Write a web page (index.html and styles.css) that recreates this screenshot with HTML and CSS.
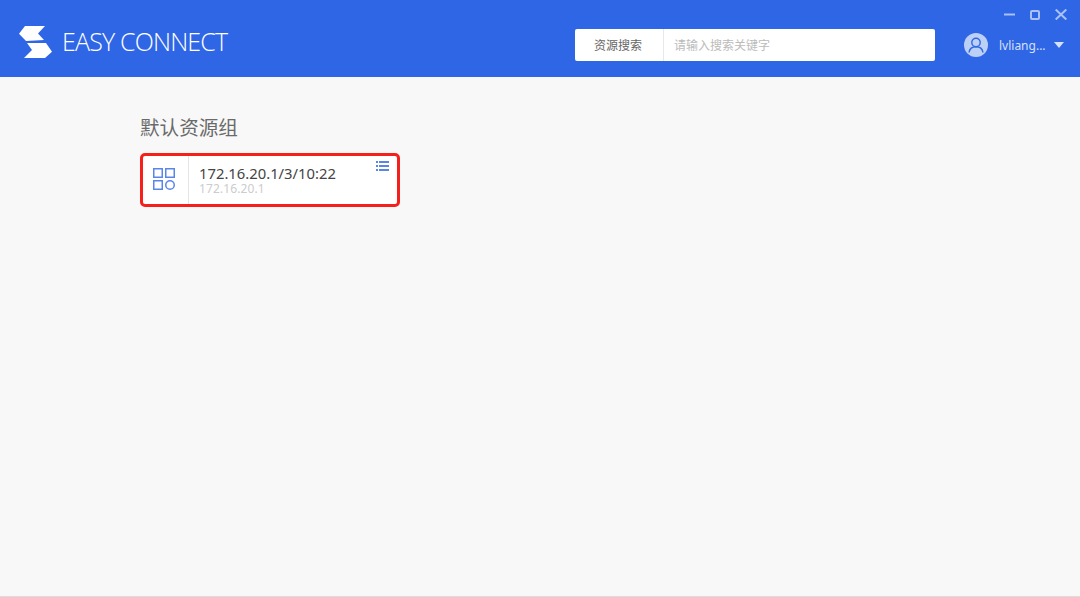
FILE: index.html
```html
<!DOCTYPE html>
<html lang="zh">
<head>
<meta charset="utf-8">
<title>EasyConnect</title>
<link rel="stylesheet" href="styles.css">
</head>
<body>
<header class="topbar">
  <div class="brand">
    <svg class="logo" width="33" height="32" viewBox="0 0 33 32"><path fill="#fff" d="M6 0H26L19 7.500L25 14L7 15L0 7.700Z"/><path fill="#fff" d="M8 17H27L33 25.700L26 32H5L13 24Z"/></svg>
    <span class="brand-name">EASY CONNECT</span>
  </div>
  <div class="search">
    <div class="search-label">资源搜索</div>
    <div class="search-input">请输入搜索关键字</div>
  </div>
  <div class="user">
    <svg class="avatar" width="24" height="24" viewBox="0 0 24 24"><circle cx="12" cy="12" r="12" fill="#bccff5"/><circle cx="12" cy="9.500" r="4.200" fill="none" stroke="#2f66e6" stroke-width="1.400"/><path d="M5 19.500c.6-4 3.400-5.800 7-5.800s6.400 1.800 7 5.800" fill="none" stroke="#2f66e6" stroke-width="1.400"/></svg>
    <span class="user-name">lvliang...</span>
    <span class="caret"></span>
  </div>
  <div class="winctl">
    <svg width="11" height="11" viewBox="0 0 11 11"><path d="M0 5.500H11" stroke="#a9c1f3" stroke-width="2"/></svg>
    <svg width="10" height="10" viewBox="0 0 10 10"><rect x="1" y="1" width="8" height="8" rx="1" fill="none" stroke="#a9c1f3" stroke-width="2"/></svg>
    <svg width="12" height="11" viewBox="0 0 12 11"><path d="M.7 .5L11.300 10.500M11.300 .5L.7 10.500" stroke="#a9c1f3" stroke-width="2"/></svg>
  </div>
</header>
<main class="content">
  <h2 class="group-title">默认资源组</h2>
  <div class="card">
    <div class="card-icon">
      <svg class="card-glyph" width="22" height="22" viewBox="0 0 22 22" fill="none" stroke="#5a86ea" stroke-width="1.500"><rect x=".75" y=".75" width="8.500" height="8.500"/><rect x="12.750" y=".75" width="8.500" height="8.500"/><rect x=".75" y="12.750" width="8.500" height="8.500"/><circle cx="17" cy="17" r="4.250"/></svg>
    </div>
    <div class="card-text">
      <div class="card-name">172.16.20.1/3/10:22</div>
      <div class="card-addr">172.16.20.1</div>
    </div>
    <svg class="card-menu" width="13" height="10" viewBox="0 0 13 10" fill="#5a86ea"><rect x="0" y="0" width="2" height="2"/><rect x="3" y="0" width="10" height="2"/><rect x="0" y="4" width="2" height="2"/><rect x="3" y="4" width="10" height="2"/><rect x="0" y="8" width="2" height="2"/><rect x="3" y="8" width="10" height="2"/></svg>
  </div>
</main>
</body>
</html>
```
FILE: styles.css
```css
* { box-sizing: border-box; }
html, body { height: 100%; }
body {
  margin: 0;
  display: flex;
  flex-direction: column;
  background: #f8f8f8;
  font-family: "Noto Sans CJK SC", "Noto Sans", sans-serif;
  overflow: hidden;
  border-bottom: 1px solid #dcdcdc;
}
.topbar {
  position: relative;
  height: 77px;
  flex: none;
  background: #2f66e6;
  display: flex;
  align-items: center;
  padding-left: 19px;
}
.brand { display: flex; align-items: center; gap: 10px; width: 556px; margin-top: 7px; }
.brand-name {
  font-family: "Open Sans", sans-serif;
  font-weight: 300;
  font-size: 25px;
  line-height: 30px;
  margin-top: -2px;
  letter-spacing: -0.83px;
  color: #fff;
  white-space: nowrap;
}
.search {
  display: flex;
  width: 360px;
  height: 32px;
  margin-top: 13px;
  background: #fff;
  border-radius: 2px;
  font-size: 12px;
  line-height: 32px;
}
.search-label {
  width: 89px;
  padding-right: 2px;
  text-align: center;
  color: #666;
  border-right: 1px solid #e8e8e8;
}
.search-input { padding-left: 10px; color: #bbb; }
.user {
  display: flex;
  align-items: center;
  margin-left: 29px;
  margin-top: 13px;
  color: #d5e0f9;
  font-size: 12px;
}
.avatar { margin-right: 11px; }
.user-name { font-family: "Noto Sans", sans-serif; width: 55px; white-space: nowrap; }
.caret {
  width: 0; height: 0;
  border-left: 5px solid transparent;
  border-right: 5px solid transparent;
  border-top: 6px solid #d5e0f9;
}
.winctl {
  position: absolute;
  top: 9px;
  right: 13px;
  display: flex;
  align-items: center;
  gap: 15px;
}
.content { padding: 35px 0 0 140px; }
.group-title {
  margin: 0 0 11px;
  font-size: 19.600px;
  line-height: 30px;
  font-weight: 400;
  color: #6a6a6a;
}
.card {
  position: relative;
  width: 260px;
  height: 54px;
  display: flex;
  background: #fff;
  border: 3px solid #f5201c;
  border-radius: 5px;
}
.card-icon {
  width: 46px;
  flex: none;
  display: flex;
  align-items: center;
  justify-content: center;
  padding-right: 3px;
  border-right: 1px solid #e4e4e4;
}
.card-glyph { margin-bottom: 2px; }
.card-text { padding: 7px 0 0 10px; }
.card-name { font-family: "Noto Sans", sans-serif; font-size: 14.800px; line-height: 20px; color: #444; }
.card-addr { font-family: "Noto Sans", sans-serif; font-size: 12px; line-height: 12px; letter-spacing: .1px; color: #ccc; }
.card-menu { position: absolute; top: 5px; right: 8px; }
```
